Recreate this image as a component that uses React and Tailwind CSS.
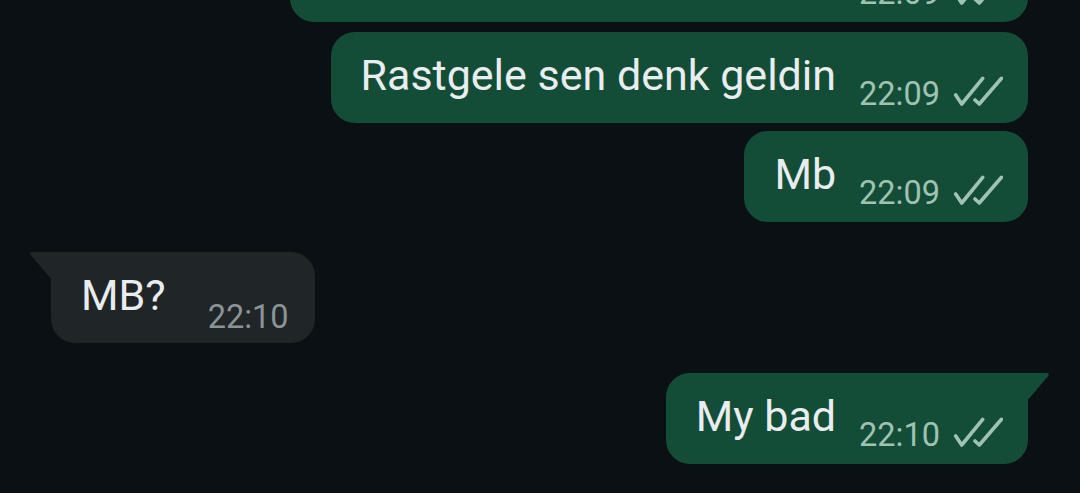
import React from 'react';

const Ticks = ({ className }) => (
  <svg width="52" height="32" viewBox="0 0 52 32" className={className} fill="none" stroke="#9fc2b3" strokeWidth="3.6" strokeLinecap="round" strokeLinejoin="round">
    <path d="M4.7 21 L10.7 30 L31.7 4.3" />
    <path d="M24 26 L28.3 30 L50.5 4.3" />
  </svg>
);

const OutTail = () => (
  <svg width="24" height="30" viewBox="0 0 24 30" className="absolute left-full top-0 -ml-[1px]">
    <path d="M0 0 H19 Q23.5 0 20.8 3.4 L0 28 Z" fill="#144d37" />
  </svg>
);

const InTail = () => (
  <svg width="24" height="30" viewBox="0 0 24 30" className="absolute right-full top-0 -mr-[1px]">
    <path d="M24 0 H5 Q0.5 0 3.2 3.4 L24 28 Z" fill="#202528" />
  </svg>
);

const Outgoing = ({ text, time, tail, className = '' }) => (
  <div className={`relative flex items-end bg-[#144d37] pl-[30px] pr-[25px] pt-[19px] pb-[13px] ${tail ? 'rounded-[24px] rounded-tr-none' : 'rounded-[24px]'} ${className}`}>
    {tail && <OutTail />}
    <span className="mb-[11px] text-[43px] leading-[48px] text-[#e9edef] whitespace-nowrap">{text}</span>
    <span className="ml-[23px] text-[32.5px] leading-[32px] text-[#9fc2b3]">{time}</span>
    <Ticks className="ml-[11px] mb-[4px]" />
  </div>
);

const Incoming = ({ text, time }) => (
  <div className="relative flex items-end rounded-[24px] rounded-tl-none bg-[#202528] pl-[30px] pr-[26px] pt-[19px] pb-[10px]">
    <InTail />
    <span className="mb-[14px] text-[43px] leading-[48px] text-[#e9edef] whitespace-nowrap">{text}</span>
    <span className="ml-[42px] text-[32.5px] leading-[32px] text-[#8b9397]">{time}</span>
  </div>
);

export default function App() {
  return (
    <div className="h-[493px] w-[1080px] overflow-hidden bg-[#0b1014] font-[Roboto,sans-serif]">
      <div className="flex flex-col pl-[51px] pr-[52px]">
        <div className="self-end -mt-[69px] flex w-[738px]">
          <Outgoing text={'\u00a0'} time="22:09" className="w-full justify-end" />
        </div>
        <div className="mt-[10px] self-end">
          <Outgoing text="Rastgele sen denk geldin" time="22:09" />
        </div>
        <div className="mt-[8px] self-end">
          <Outgoing text="Mb" time="22:09" />
        </div>
        <div className="mt-[30px] self-start">
          <Incoming text="MB?" time="22:10" />
        </div>
        <div className="mt-[30px] self-end">
          <Outgoing text="My bad" time="22:10" tail />
        </div>
      </div>
    </div>
  );
}
